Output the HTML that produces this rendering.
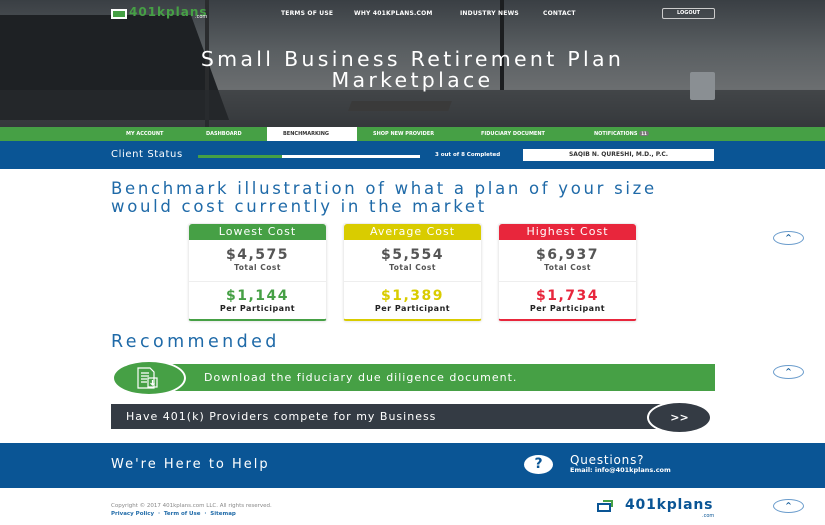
<!DOCTYPE html>
<html><head><style>
*{margin:0;padding:0;box-sizing:border-box}
body{width:825px;height:525px;overflow:hidden;font-family:"DejaVu Sans",sans-serif;background:#fff;position:relative}
.abs{position:absolute;white-space:nowrap}
.hero{left:0;top:0;width:825px;height:127px;background:linear-gradient(180deg,#3a3f44 0%,#5a5f62 40%,#6b6e70 70%,#4a4d50 100%);overflow:hidden}
.nav a{position:absolute;top:10px;color:#fff;font-size:6px;font-weight:bold;letter-spacing:.2px}
.tabs{left:0;top:127px;width:825px;height:14px;background:#46a045}
.tabs span{position:absolute;top:4px;font-size:5px;font-weight:bold;color:#fff;white-space:nowrap}
.status{left:0;top:141px;width:825px;height:28px;background:#0a5595}
.card{position:absolute;top:223px;width:139px;height:98px;background:#fff;border:1px solid #eee;border-radius:3px;box-shadow:0 1px 2px rgba(0,0,0,.1);text-align:center}
.card .h{height:16px;color:#fff;font-size:11px;letter-spacing:1px;line-height:16px;border-radius:3px 3px 0 0}
.card .big{font-size:14px;font-weight:bold;color:#555;margin-top:7px;letter-spacing:1.5px;line-height:16px}
.card .sm{font-size:7.5px;font-weight:bold;color:#555;letter-spacing:.5px}
.card .sep{height:1px;background:#eee;margin-top:9px}
.card .big2{font-size:14px;font-weight:bold;margin-top:6px;letter-spacing:1.5px;line-height:16px}
.card .sm2{font-size:8px;font-weight:bold;color:#222;letter-spacing:.5px}
.up{position:absolute;left:773px;width:31px;height:14px;border:1px solid #6a9ccc;border-radius:50%;color:#0a5595;font-size:8px;text-align:center;line-height:12px;font-weight:bold}
</style></head><body>
<div class="abs hero">
  <div class="abs" style="top:15px;width:240px;height:105px;background:#1e2124;transform:skewX(20deg);left:-30px"></div>
  <div class="abs" style="left:205px;top:0;width:4px;height:127px;background:#2a2c2e"></div>
  <div class="abs" style="left:500px;top:0;width:4px;height:90px;background:#1c1e20"></div>
  <div class="abs" style="left:0;top:90px;width:825px;height:37px;background:rgba(40,43,46,.6)"></div>
  <div class="abs" style="left:350px;top:101px;width:100px;height:10px;background:#3a3a3a;transform:skewX(-20deg)"></div>
  <div class="abs" style="left:690px;top:72px;width:25px;height:28px;background:#8a8f93;border-radius:2px"></div>
</div>
<div class="abs" style="left:111px;top:9px;width:16px;height:10px;border:2px solid #fff;background:#46a045"></div>
<div class="abs" style="left:129px;top:5px;color:#46a045;font-size:12px;font-weight:bold;letter-spacing:1px">401kplans</div>
<div class="abs" style="left:195px;top:14px;color:#fff;font-size:5px">.com</div>
<div class="nav"><a style="left:281px">TERMS OF USE</a><a style="left:354px">WHY 401KPLANS.COM</a><a style="left:460px">INDUSTRY NEWS</a><a style="left:543px">CONTACT</a></div>
<div class="abs" style="left:662px;top:8px;width:53px;height:11px;border:1px solid #ccc;border-radius:2px;color:#fff;font-size:5px;font-weight:bold;text-align:center;line-height:9px">LOGOUT</div>
<div class="abs" style="left:0;top:49px;width:825px;text-align:center;color:#fff;font-size:20.5px;line-height:21px;letter-spacing:3.3px">Small Business Retirement Plan<br>Marketplace</div>
<div class="abs tabs">
  <span style="left:126px">MY ACCOUNT</span><span style="left:206px">DASHBOARD</span>
  <div class="abs" style="left:267px;top:0;width:90px;height:14px;background:#fff"></div>
  <span style="left:283px;color:#333">BENCHMARKING</span><span style="left:373px">SHOP NEW PROVIDER</span><span style="left:481px">FIDUCIARY DOCUMENT</span><span style="left:594px">NOTIFICATIONS <b style="background:#777;border-radius:3px;padding:0 2px;font-size:4px">11</b></span>
</div>
<div class="abs status">
  <div class="abs" style="left:111px;top:8px;color:#fff;font-size:10px;letter-spacing:.6px">Client Status</div>
  <div class="abs" style="left:198px;top:14px;width:222px;height:3px;background:#fff"></div>
  <div class="abs" style="left:198px;top:14px;width:84px;height:3px;background:#46a045"></div>
  <div class="abs" style="left:435px;top:11px;color:#fff;font-size:5.5px;font-weight:bold">3 out of 8 Completed</div>
  <div class="abs" style="left:523px;top:8px;width:191px;height:12px;background:#fff;font-size:6px;text-align:center;line-height:12px;color:#333;font-weight:bold">SAQIB N. QURESHI, M.D., P.C.</div>
</div>
<div class="abs" style="left:111px;top:180px;color:#1f6aa8;font-size:16.5px;line-height:18px;letter-spacing:2.7px">Benchmark illustration of what a plan of your size<br>would cost currently in the market</div>
<div class="card" style="left:188px;border-bottom:2px solid #46a045"><div class="h" style="background:#46a045">Lowest Cost</div><div class="big">$4,575</div><div class="sm">Total Cost</div><div class="sep"></div><div class="big2" style="color:#46a045">$1,144</div><div class="sm2">Per Participant</div></div>
<div class="card" style="left:343px;border-bottom:2px solid #d9cc00"><div class="h" style="background:#d9cc00">Average Cost</div><div class="big">$5,554</div><div class="sm">Total Cost</div><div class="sep"></div><div class="big2" style="color:#d9cc00">$1,389</div><div class="sm2">Per Participant</div></div>
<div class="card" style="left:498px;border-bottom:2px solid #e8263c"><div class="h" style="background:#e8263c">Highest Cost</div><div class="big">$6,937</div><div class="sm">Total Cost</div><div class="sep"></div><div class="big2" style="color:#e8263c">$1,734</div><div class="sm2">Per Participant</div></div>
<div class="up" style="top:231px">^</div>
<div class="abs" style="left:111px;top:332px;color:#1f6aa8;font-size:17.5px;letter-spacing:3.4px">Recommended</div>
<div class="abs" style="left:170px;top:364px;width:545px;height:27px;background:#46a045"></div>
<div class="abs" style="left:112px;top:360px;width:74px;height:36px;border-radius:50%;background:#46a045;border:2px solid #fff"></div>
<svg class="abs" style="left:136px;top:367px" width="30" height="22" viewBox="0 0 30 22" fill="none" stroke="#fff" stroke-width="1.2"><path d="M2 1h12l4 4v16H2z M5 6h8 M5 9h8 M5 12h6 M5 15h6"/><rect x="12" y="11" width="9" height="9"/><path d="M16.5 13v5 M14.5 16l2 2 2-2"/></svg>
<div class="abs" style="left:204px;top:371px;color:#fff;font-size:11px;letter-spacing:1px">Download the fiduciary due diligence document.</div>
<div class="up" style="top:365px">^</div>
<div class="abs" style="left:111px;top:404px;width:560px;height:25px;background:#343b44"></div>
<div class="abs" style="left:126px;top:410px;color:#fff;font-size:11px;letter-spacing:1px">Have 401(k) Providers compete for my Business</div>
<div class="abs" style="left:647px;top:401px;width:65px;height:33px;border-radius:50%;background:#343b44;border:2px solid #fff;color:#fff;font-size:11px;text-align:center;line-height:29px;font-weight:bold">&gt;&gt;</div>
<div class="abs" style="left:0;top:443px;width:825px;height:45px;background:#0a5595"></div>
<div class="abs" style="left:111px;top:457px;color:#fff;font-size:13px;letter-spacing:2px">We're Here to Help</div>
<div class="abs" style="left:524px;top:455px;width:29px;height:19px;border-radius:50%;background:#fff;color:#0a5595;font-size:14px;font-weight:bold;text-align:center;line-height:19px">?</div>
<div class="abs" style="left:570px;top:453px;color:#fff;font-size:12px;letter-spacing:.8px">Questions?</div>
<div class="abs" style="left:570px;top:466px;color:#fff;font-size:6.5px;font-weight:bold">Email: info@401kplans.com</div>
<div class="abs" style="left:111px;top:503px;color:#888;font-size:5.5px">Copyright © 2017 401kplans.com LLC. All rights reserved.</div>
<div class="abs" style="left:111px;top:511px;color:#1f6aa8;font-size:5.5px;font-weight:bold">Privacy Policy &nbsp;·&nbsp; Term of Use &nbsp;·&nbsp; Sitemap</div>
<div class="abs" style="left:597px;top:503px;width:14px;height:9px;border:2px solid #0a5595"></div>
<div class="abs" style="left:603px;top:500px;width:10px;height:7px;border-top:2px solid #46a045;border-right:2px solid #46a045"></div>
<div class="abs" style="left:625px;top:497px;color:#0a5595;font-size:14px;font-weight:bold;letter-spacing:.8px">401kplans</div>
<div class="abs" style="left:702px;top:513px;color:#0a5595;font-size:5px">.com</div>
<div class="up" style="top:499px">^</div>
</body></html>
